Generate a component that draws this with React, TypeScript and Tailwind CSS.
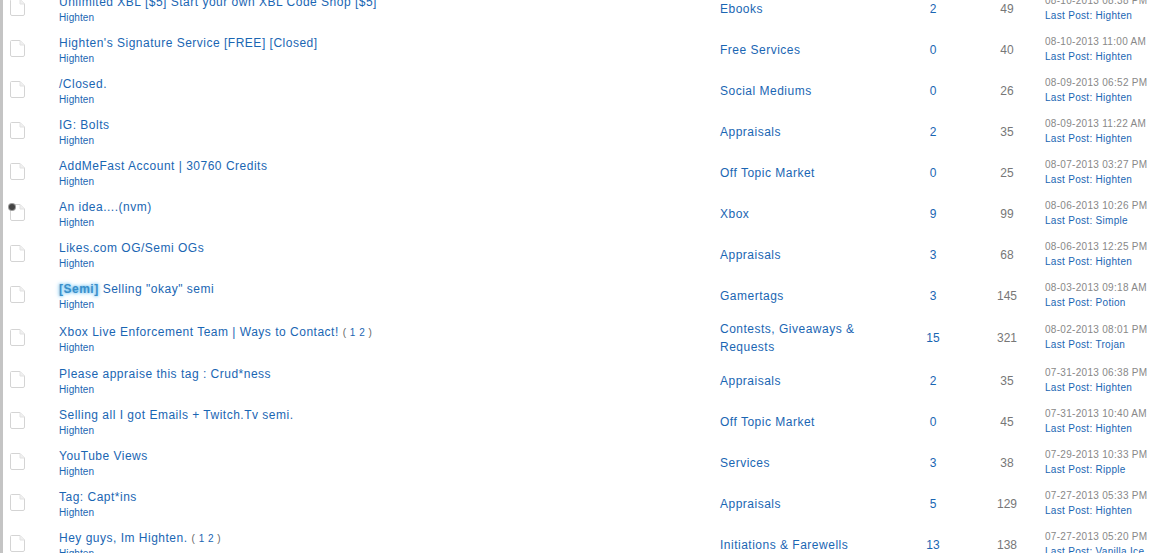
const threads = [
  { title: "Unlimited XBL [$5] Start your own XBL Code Shop [$5]", forum: "Ebooks", replies: 2, views: 49, date: "08-10-2013 08:38 PM", last: "Highten" },
  { title: "Highten's Signature Service [FREE] [Closed]", forum: "Free Services", replies: 0, views: 40, date: "08-10-2013 11:00 AM", last: "Highten" },
  { title: "/Closed.", forum: "Social Mediums", replies: 0, views: 26, date: "08-09-2013 06:52 PM", last: "Highten" },
  { title: "IG: Bolts", forum: "Appraisals", replies: 2, views: 35, date: "08-09-2013 11:22 AM", last: "Highten" },
  { title: "AddMeFast Account | 30760 Credits", forum: "Off Topic Market", replies: 0, views: 25, date: "08-07-2013 03:27 PM", last: "Highten" },
  { title: "An idea....(nvm)", forum: "Xbox", replies: 9, views: 99, date: "08-06-2013 10:26 PM", last: "Simple", dot: true },
  { title: "Likes.com OG/Semi OGs", forum: "Appraisals", replies: 3, views: 68, date: "08-06-2013 12:25 PM", last: "Highten" },
  { title: 'Selling "okay" semi', prefix: "[Semi]", forum: "Gamertags", replies: 3, views: 145, date: "08-03-2013 09:18 AM", last: "Potion" },
  { title: "Xbox Live Enforcement Team | Ways to Contact!", pages: true, forum: "Contests, Giveaways & Requests", replies: 15, views: 321, date: "08-02-2013 08:01 PM", last: "Trojan" },
  { title: "Please appraise this tag : Crud*ness", forum: "Appraisals", replies: 2, views: 35, date: "07-31-2013 06:38 PM", last: "Highten" },
  { title: "Selling all I got Emails + Twitch.Tv semi.", forum: "Off Topic Market", replies: 0, views: 45, date: "07-31-2013 10:40 AM", last: "Highten" },
  { title: "YouTube Views", forum: "Services", replies: 3, views: 38, date: "07-29-2013 10:33 PM", last: "Ripple" },
  { title: "Tag: Capt*ins", forum: "Appraisals", replies: 5, views: 129, date: "07-27-2013 05:33 PM", last: "Highten" },
  { title: "Hey guys, Im Highten.", pages: true, forum: "Initiations & Farewells", replies: 13, views: 138, date: "07-27-2013 05:20 PM", last: "Vanilla Ice" },
];

const FileIcon = () => (
  <svg width="15" height="17" viewBox="0 0 15 17" className="block">
    <path d="M1.5.5H10L14.5 5V15a1.5 1.5 0 0 1-1.5 1.5H2A1.5 1.5 0 0 1 .5 15V1.5a1 1 0 0 1 1-1Z" fill="#fff" stroke="#d4d4d4" />
    <path d="M10 .5V5H14.5" fill="#f0f0f0" stroke="#e2e2e2" />
  </svg>
);

export default function App() {
  return (
    <div className="h-[553px] w-[1160px] overflow-hidden bg-white font-['Liberation_Sans',Arial,sans-serif] text-[12px] text-[#1a66b3]">
      <div className="-mt-[12px] border-l-[3px] border-[#c4c4c4]">
        {threads.map((t) => (
          <div key={t.date} className="flex min-h-[41px] items-center">
            <div className="relative ml-[7px] w-[49px] shrink-0 pb-[2px]">
              <FileIcon />
              {t.dot && (
                <span className="absolute -left-[1px] top-0 h-[6px] w-[6px] rounded-full bg-[#444] ring-1 ring-[#999]" />
              )}
            </div>
            <div className="w-[661px] shrink-0 pt-[2px]">
              <div className="h-[17px] leading-[18px] tracking-[0.5px]">
                {t.prefix && (
                  <span className="mr-1 font-bold text-[#3a8fc9] [text-shadow:0_0_3px_#5bb8f0,0_0_5px_#8fd0f5]">{t.prefix}</span>
                )}
                {t.title}
                {t.pages && <span className="ml-1 text-[10px] text-[#666]">( <span className="text-[#1a66b3]">1 2</span> )</span>}
              </div>
              <div className="h-[16px] text-[10px] leading-[16px] tracking-[0.1px]">Highten</div>
            </div>
            <div className="w-[164px] shrink-0 py-1 leading-[18px] tracking-[0.5px]">{t.forum}</div>
            <div className="w-[98px] shrink-0 text-center">{t.replies}</div>
            <div className="w-[50px] shrink-0 text-center text-[#777]">{t.views}</div>
            <div className="ml-[13px] shrink-0 whitespace-nowrap pb-[2px] text-[10px] leading-[15px] tracking-[0.3px]">
              <div className="text-[#888]">{t.date}</div>
              <div>Last Post: {t.last}</div>
            </div>
          </div>
        ))}
      </div>
    </div>
  );
}
